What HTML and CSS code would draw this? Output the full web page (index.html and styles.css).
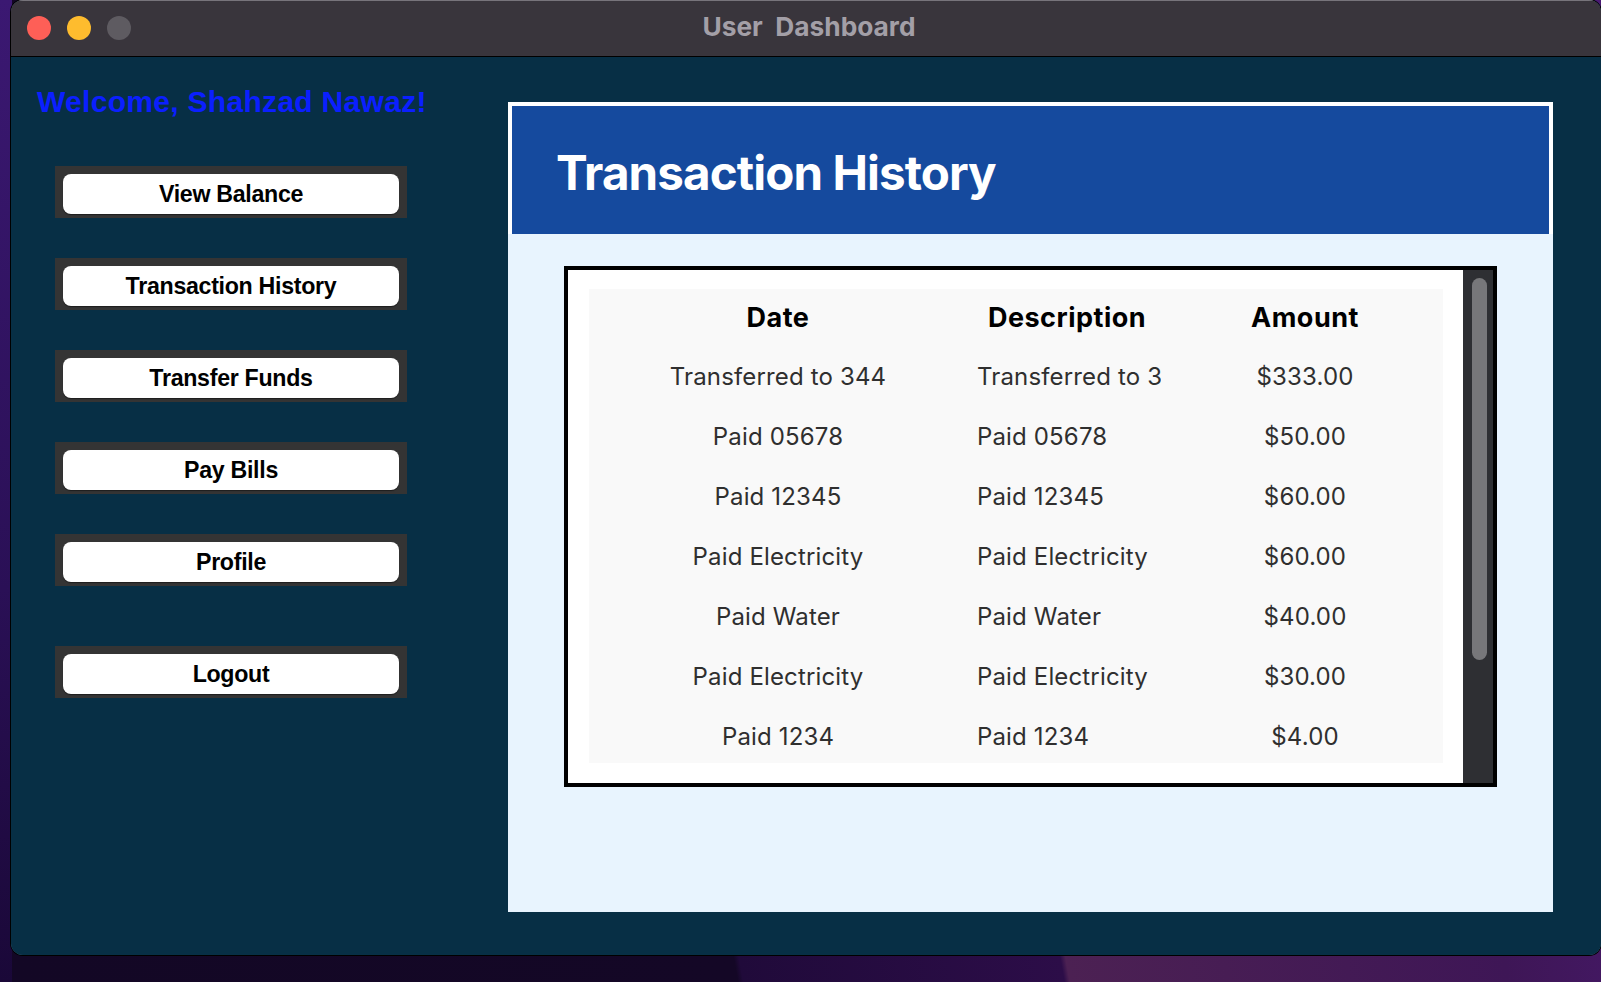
FILE: index.html
```html
<!DOCTYPE html>
<html>
<head>
<meta charset="utf-8">
<title>User Dashboard</title>
<link rel="stylesheet" href="styles.css">
</head>
<body>
<div class="desktop">
  <div class="window">
    <div class="titlebar">
      <div class="lights">
        <span class="light red"></span>
        <span class="light yellow"></span>
        <span class="light gray"></span>
      </div>
      <div class="title">User  Dashboard</div>
    </div>
    <div class="content">
      <aside class="sidebar">
        <h2 class="welcome">Welcome, Shahzad Nawaz!</h2>
        <nav class="menu">
          <div class="btn-frame"><button class="btn">View Balance</button></div>
          <div class="btn-frame"><button class="btn">Transaction History</button></div>
          <div class="btn-frame"><button class="btn">Transfer Funds</button></div>
          <div class="btn-frame"><button class="btn">Pay Bills</button></div>
          <div class="btn-frame"><button class="btn">Profile</button></div>
          <div class="btn-frame logout"><button class="btn">Logout</button></div>
        </nav>
      </aside>
      <main class="panel">
        <header class="panel-header">
          <h1>Transaction History</h1>
        </header>
        <div class="table-box">
          <div class="table-view">
            <div class="table">
              <div class="row head">
                <div class="cell c-date">Date</div>
                <div class="cell c-desc-h">Description</div>
                <div class="cell c-amt">Amount</div>
              </div>
              <div class="row">
                <div class="cell c-date">Transferred to 344</div>
                <div class="cell c-desc">Transferred to 344</div>
                <div class="cell c-amt">$333.00</div>
              </div>
              <div class="row">
                <div class="cell c-date">Paid 05678</div>
                <div class="cell c-desc">Paid 05678</div>
                <div class="cell c-amt">$50.00</div>
              </div>
              <div class="row">
                <div class="cell c-date">Paid 12345</div>
                <div class="cell c-desc">Paid 12345</div>
                <div class="cell c-amt">$60.00</div>
              </div>
              <div class="row">
                <div class="cell c-date">Paid Electricity</div>
                <div class="cell c-desc">Paid Electricity</div>
                <div class="cell c-amt">$60.00</div>
              </div>
              <div class="row">
                <div class="cell c-date">Paid Water</div>
                <div class="cell c-desc">Paid Water</div>
                <div class="cell c-amt">$40.00</div>
              </div>
              <div class="row">
                <div class="cell c-date">Paid Electricity</div>
                <div class="cell c-desc">Paid Electricity</div>
                <div class="cell c-amt">$30.00</div>
              </div>
              <div class="row">
                <div class="cell c-date">Paid 1234</div>
                <div class="cell c-desc">Paid 1234</div>
                <div class="cell c-amt">$4.00</div>
              </div>
            </div>
          </div>
          <div class="scrollbar"><div class="thumb"></div></div>
        </div>
      </main>
    </div>
  </div>
</div>
</body>
</html>
```
FILE: styles.css
```css
* { box-sizing: border-box; }
html, body {
  margin: 0;
  padding: 0;
  width: 1601px;
  height: 982px;
  overflow: hidden;
}
body {
  font-family: "Liberation Sans", Arial, sans-serif;
  background:
    linear-gradient(180deg, #3b1872 0%, #2a1056 60%, #1a0838 100%) left top / 12px 100% no-repeat,
    linear-gradient(80deg, #130725 0%, #140726 41.6%, #200a3a 41.9%, #2c0d48 60%, #4c2153 60.3%, #3e1656 85%, #4a1b74 100%);
}
.desktop {
  padding-left: 11px;
}
.window {
  width: 1590px;
  height: 955px;
  border-radius: 12px;
  overflow: hidden;
  display: flex;
  flex-direction: column;
  background: #072f45;
  box-shadow: 0 0 0 1px #000, inset 0 0 0 1px rgba(150, 170, 185, 0.45);
}
.titlebar {
  height: 57px;
  flex: none;
  background: #39353c;
  border-bottom: 1px solid #000;
  border-top: 1px solid #77747b;
  display: flex;
  align-items: center;
  position: relative;
}
.lights {
  display: flex;
  gap: 16px;
  padding-left: 16px;
  margin-top: -2px;
}
.light {
  width: 24px;
  height: 24px;
  border-radius: 50%;
  display: block;
}
.light.red { background: #fe5f57; }
.light.yellow { background: #febc2e; }
.light.gray { background: #5e5b61; }
.title {
  position: absolute;
  left: 0;
  right: 0;
  top: 10px;
  text-align: center;
  white-space: pre;
  font-family: Inter, "Liberation Sans", sans-serif;
  font-weight: 700;
  font-size: 26.3px;
  color: #a39fa7;
  padding-left: 6px;
}
.content {
  flex: 1;
  display: flex;
  background: #072f45;
}
.sidebar {
  width: 497px;
  flex: none;
  padding: 25px 0 0 26px;
}
.welcome {
  margin: 0;
  font-family: "Liberation Sans", Arial, sans-serif;
  font-weight: 700;
  font-size: 30px;
  letter-spacing: 0.3px;
  line-height: 40px;
  color: #0b1fff;
  white-space: nowrap;
}
.menu {
  display: flex;
  flex-direction: column;
  gap: 40px;
  padding-left: 18px;
  margin-top: 44px;
}
.btn-frame {
  width: 352px;
  height: 52px;
  background: #343434;
  padding: 8px 8px 4px 8px;
}
.btn-frame.logout {
  margin-top: 20px;
}
.btn {
  width: 100%;
  height: 40px;
  border: none;
  border-radius: 8px;
  background: #ffffff;
  box-shadow: 0 1px 1px rgba(0, 0, 0, 0.45);
  font-family: "Liberation Sans", Arial, sans-serif;
  font-weight: 700;
  font-size: 23.2px;
  letter-spacing: -0.3px;
  color: #000;
  padding: 0;
  line-height: 40px;
}
.panel {
  margin-top: 45px;
  width: 1045px;
  height: 810px;
  background: #e8f4fe;
  display: flex;
  flex-direction: column;
}
.panel-header {
  height: 132px;
  background: #154a9e;
  border: 4px solid #ffffff;
  border-bottom: none;
  display: flex;
  align-items: center;
  padding-left: 44px;
}
.panel-header h1 {
  margin: 0;
  margin-top: 4px;
  font-family: Inter, "Liberation Sans", sans-serif;
  font-weight: 700;
  font-size: 47.5px;
  color: #ffffff;
  letter-spacing: -0.9px;
}
.table-box {
  margin: 32px 0 0 56px;
  width: 933px;
  height: 521px;
  border: 4px solid #000;
  display: flex;
  background: #ffffff;
}
.table-view {
  flex: 1;
  padding: 19px 20px 20px 21px;
  background: #ffffff;
}
.table {
  height: 474px;
  background: #f9f9f9;
  overflow: hidden;
  font-family: Inter, "Liberation Sans", sans-serif;
}
.row {
  display: grid;
  grid-template-columns: 378px 200px 276px;
  height: 60px;
  align-items: center;
  font-size: 24px;
  letter-spacing: 0.15px;
  color: #2f2f2f;
}
.row.head {
  height: 57px;
  font-weight: 700;
  font-size: 27px;
  letter-spacing: 0.5px;
  color: #000;
}
.cell {
  white-space: nowrap;
  overflow: hidden;
}
.c-date, .c-amt, .c-desc-h {
  text-align: center;
}
.c-desc {
  text-align: left;
  padding-left: 10px;
  margin-right: 6px;
}
.scrollbar {
  width: 30px;
  flex: none;
  background: #2e2f33;
  padding: 8px 0 0 9px;
}
.thumb {
  width: 15px;
  height: 382px;
  border-radius: 8px;
  background: #77777a;
}
```
